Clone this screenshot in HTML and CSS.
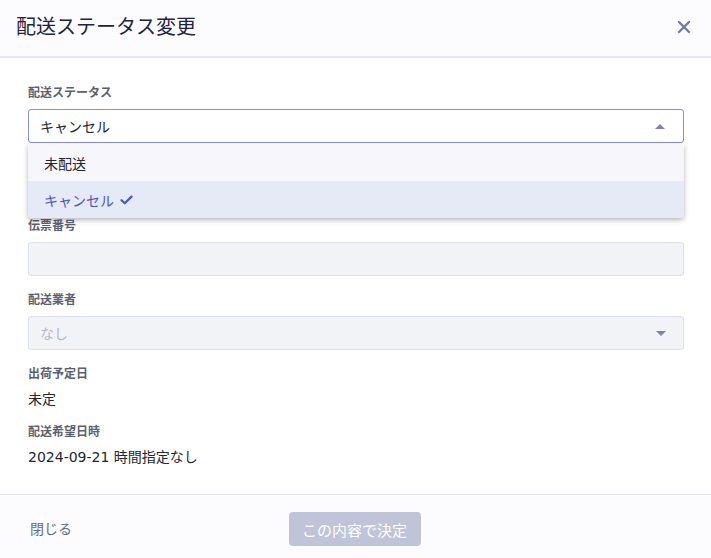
FILE: index.html
```html
<!DOCTYPE html>
<html lang="ja">
<head>
<meta charset="utf-8">
<title>配送ステータス変更</title>
<link rel="stylesheet" href="styles.css">
</head>
<body>
<div class="modal">
  <header class="modal-header">
    <h1 class="modal-title">配送ステータス変更</h1>
    <button class="close-btn" aria-label="閉じる">
      <svg width="14" height="14" viewBox="0 0 14 14"><path d="M2 2 L12 12 M12 2 L2 12" stroke="#7479a6" stroke-width="2.4" stroke-linecap="round"/></svg>
    </button>
  </header>
  <main class="modal-body">
    <div class="field field-status">
      <div class="field-label">配送ステータス</div>
      <div class="select-wrap">
        <div class="select select-open">
          <span class="select-value">キャンセル</span>
          <span class="caret caret-up"></span>
        </div>
        <ul class="menu">
          <li class="menu-item">未配送</li>
          <li class="menu-item menu-item-selected">キャンセル
            <svg class="check" width="13" height="10" viewBox="0 0 13 10"><path d="M1.5 5.2 L4.8 8.3 L11.5 1.6" fill="none" stroke="#4a57c0" stroke-width="2.2" stroke-linecap="round" stroke-linejoin="round"/></svg>
          </li>
        </ul>
      </div>
    </div>
    <div class="field">
      <div class="field-label">伝票番号</div>
      <div class="input input-disabled"></div>
    </div>
    <div class="field field-carrier">
      <div class="field-label">配送業者</div>
      <div class="select select-disabled">
        <span class="select-placeholder">なし</span>
        <span class="caret caret-down"></span>
      </div>
    </div>
    <div class="field field-text">
      <div class="field-label">出荷予定日</div>
      <div class="field-value">未定</div>
    </div>
    <div class="field field-text">
      <div class="field-label">配送希望日時</div>
      <div class="field-value">2024-09-21 時間指定なし</div>
    </div>
  </main>
  <footer class="modal-footer">
    <a class="close-link">閉じる</a>
    <button class="submit-btn" disabled>この内容で決定</button>
    <span></span>
  </footer>
</div>
</body>
</html>
```
FILE: styles.css
```css
* { box-sizing: border-box; }
html, body { margin: 0; padding: 0; }
body {
  font-family: "DejaVu Sans", "Noto Sans CJK JP", sans-serif;
  background: #ffffff;
  color: #222533;
  width: 711px;
  height: 558px;
  overflow: hidden;
}
.modal { display: flex; flex-direction: column; height: 558px; }
.modal-header {
  height: 58px;
  flex: none;
  background: #fcfcfe;
  border-bottom: 2px solid #e6e7f1;
  display: flex;
  align-items: center;
  justify-content: space-between;
  padding: 0 20px 2px 16px;
}
.modal-title {
  margin: 0;
  font-size: 20px;
  font-weight: normal;
  color: #1f2240;
  line-height: 28px;
}
.close-btn {
  border: 0;
  background: none;
  padding: 0;
  width: 14px;
  height: 14px;
  display: flex;
}
.modal-body {
  flex: 1;
  padding: 26px 27px 0 28px;
}
.field { margin-bottom: 15px; }
.field-status { margin-bottom: 74px; }
.field-carrier { margin-bottom: 15px; }
.field-text { margin-bottom: 14px; }
.field-label {
  font-size: 12px;
  font-weight: bold;
  line-height: 18px;
  color: #5b6070;
  margin-bottom: 7px;
}
.field-text .field-label { margin-bottom: 6px; }
.field-value {
  font-size: 14px;
  line-height: 20px;
  color: #222533;
}
.select-wrap { position: relative; }
.select, .input {
  height: 34px;
  border-radius: 3px;
  display: flex;
  align-items: center;
  justify-content: space-between;
  padding: 0 18px 0 11px;
}
.select-open {
  background: #fff;
  border: 1px solid #8990d6;
}
.select-value { font-size: 14px; color: #222533; }
.input-disabled, .select-disabled {
  background: #f2f3f7;
  border: 1px solid #dcdfeb;
}
.select-placeholder { font-size: 14px; color: #b4b7c3; }
.caret {
  width: 0;
  height: 0;
  border-left: 5px solid transparent;
  border-right: 5px solid transparent;
}
.caret-up { border-bottom: 5px solid #7e82b0; }
.caret-down { border-top: 5px solid #7e82b0; margin-right: -1px; }
.menu {
  position: absolute;
  left: 0;
  right: 0;
  top: 35px;
  margin: 0;
  padding: 0;
  list-style: none;
  border-radius: 0 0 4px 4px;
  box-shadow: 0 2px 5px rgba(40, 40, 60, 0.35);
  overflow: hidden;
  z-index: 2;
}
.menu-item {
  height: 37px;
  display: flex;
  align-items: center;
  padding-left: 16px;
  font-size: 14px;
  background: #f7f7fb;
  color: #222533;
}
.menu-item-selected {
  height: 37px;
  background: #e6eaf6;
  color: #4b56b8;
}
.check { margin-left: 6px; }
.modal-footer {
  flex: none;
  height: 64px;
  background: #fcfcfe;
  border-top: 1px solid #e4e6ef;
  display: grid;
  grid-template-columns: 1fr auto 1fr;
  align-items: start;
  padding: 17px 29px 0 27px;
}
.close-link {
  font-size: 14px;
  color: #666b7a;
  line-height: 34px;
  padding-left: 3px;
}
.submit-btn {
  height: 34px;
  width: 132px;
  border: 0;
  border-radius: 4px;
  background: #bfc4d8;
  color: #ffffff;
  font-family: "DejaVu Sans", "Noto Sans CJK JP", sans-serif;
  font-size: 15px;
  padding: 0;
}
```
